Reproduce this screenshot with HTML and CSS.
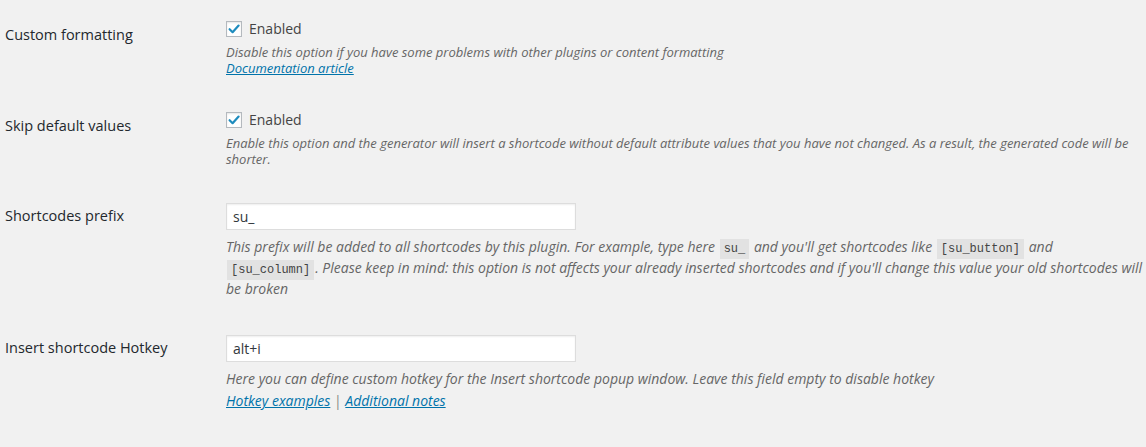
FILE: index.html
```html
<!DOCTYPE html>
<html>
<head>
<meta charset="utf-8">
<link rel="stylesheet" href="styles.css">
</head>
<body>
<div class="form">
  <div class="row">
    <div class="label">Custom formatting</div>
    <div class="field">
      <label class="check"><span class="box"><svg viewBox="0 0 16 16" width="16" height="16"><path d="M3.6 8.2 L6.6 11.2 L12.6 4.6" fill="none" stroke="#1e8cbe" stroke-width="2.2" stroke-linecap="round" stroke-linejoin="round"/></svg></span>Enabled</label>
      <div class="desc">Disable this option if you have some problems with other plugins or content formatting<br><a href="#">Documentation article</a></div>
    </div>
  </div>
  <div class="row">
    <div class="label">Skip default values</div>
    <div class="field">
      <label class="check"><span class="box"><svg viewBox="0 0 16 16" width="16" height="16"><path d="M3.6 8.2 L6.6 11.2 L12.6 4.6" fill="none" stroke="#1e8cbe" stroke-width="2.2" stroke-linecap="round" stroke-linejoin="round"/></svg></span>Enabled</label>
      <div class="desc">Enable this option and the generator will insert a shortcode without default attribute values that you have not changed. As a result, the generated code will be shorter.</div>
    </div>
  </div>
  <div class="row">
    <div class="label label-input">Shortcodes prefix</div>
    <div class="field">
      <div class="input">su_</div>
      <div class="desc desc-code">This prefix will be added to all shortcodes by this plugin. For example, type here <code>su_</code> and you'll get shortcodes like <code>[su_button]</code> and <code>[su_column]</code>. Please keep in mind: this option is not affects your already inserted shortcodes and if you'll change this value your old shortcodes will be broken</div>
    </div>
  </div>
  <div class="row">
    <div class="label label-input">Insert shortcode Hotkey</div>
    <div class="field">
      <div class="input">alt+i</div>
      <div class="desc desc-input">Here you can define custom hotkey for the Insert shortcode popup window. Leave this field empty to disable hotkey</div>
      <div class="desc links"><a href="#">Hotkey examples</a> <span class="sep">|</span> <a href="#">Additional notes</a></div>
    </div>
  </div>
</div>
</body>
</html>
```
FILE: styles.css
```css
html, body {
  margin: 0;
  padding: 0;
  background: #f1f1f1;
}
body {
  font-family: "Open Sans", "Liberation Sans", sans-serif;
  font-size: 14px;
  color: #444;
  width: 1146px;
  height: 447px;
  overflow: hidden;
}
.form {
  width: 1144px;
}
.row {
  display: flex;
  padding: 21px 0 15px 0;
}
.label {
  width: 221px;
  padding-left: 5px;
  padding-top: 4px;
  line-height: 20px;
  font-size: 14.5px;
  color: #23282d;
  flex-shrink: 0;
}
.label-input {
  padding-top: 3px;
}
.field {
  flex: 1;
  min-width: 0;
}
.check {
  display: flex;
  align-items: center;
  height: 16px;
  line-height: 16px;
  color: #444;
}
.box {
  width: 16px;
  height: 16px;
  box-sizing: border-box;
  border: 1px solid #b4b9be;
  background: #fff;
  box-shadow: inset 0 1px 2px rgba(0,0,0,0.1);
  margin-right: 7px;
  position: relative;
  display: block;
}
.box svg {
  position: absolute;
  left: -1px;
  top: -1px;
}
.desc {
  font-size: 13px;
  font-style: italic;
  color: #666;
  line-height: 16px;
  margin-top: 7px;
}
.desc a {
  color: #0073aa;
  text-decoration: underline;
}
.input {
  width: 350px;
  height: 27px;
  box-sizing: border-box;
  border: 1px solid #ddd;
  background: #fff;
  box-shadow: inset 0 1px 2px rgba(0,0,0,0.07);
  padding: 0 6px;
  line-height: 25px;
  color: #32373c;
  font-size: 14px;
}
.desc-code {
  font-size: 14px;
  line-height: 21px;
  margin-top: 6px;
}
.desc code {
  font-family: "Liberation Mono", "DejaVu Sans Mono", monospace;
  font-style: normal;
  font-size: 12px;
  line-height: 12px;
  background: #e2e2e2;
  color: #444;
  padding: 3px 4px 3px;
  margin: 0 1px;
}
.desc-input {
  font-size: 14px;
  margin-top: 8px;
  line-height: 18px;
}
.links {
  font-size: 14px;
  margin-top: 4px;
  line-height: 18px;
}
.sep {
  font-style: normal;
  color: #888;
}
```
